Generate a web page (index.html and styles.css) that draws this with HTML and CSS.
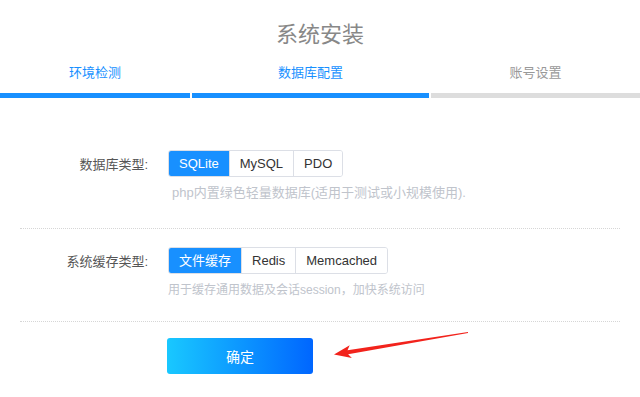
FILE: index.html
```html
<!DOCTYPE html>
<html lang="zh-CN">
<head>
    <meta charset="UTF-8">
    <title>系统安装</title>
    <link rel="stylesheet" href="styles.css">
</head>
<body>
<div class="page">
    <div class="header">
        <h1>系统安装</h1>
        <div class="steps">
            <div class="step done" style="width: 190px">
                <div class="step-label">环境检测</div>
                <div class="step-bar"></div>
            </div>
            <div class="step done" style="width: 237px">
                <div class="step-label">数据库配置</div>
                <div class="step-bar"></div>
            </div>
            <div class="step" style="width: 209px">
                <div class="step-label">账号设置</div>
                <div class="step-bar"></div>
            </div>
        </div>
    </div>

    <div class="form">
        <div class="form-item first">
            <div class="form-row">
                <label class="form-label">数据库类型:</label>
                <div class="btn-group">
                    <span class="opt active">SQLite</span>
                    <span class="opt">MySQL</span>
                    <span class="opt">PDO</span>
                </div>
            </div>
            <div class="form-tip big">php内置绿色轻量数据库(适用于测试或小规模使用).</div>
        </div>
        <div class="form-item">
            <div class="form-row">
                <label class="form-label">系统缓存类型:</label>
                <div class="btn-group">
                    <span class="opt active">文件缓存</span>
                    <span class="opt">Redis</span>
                    <span class="opt">Memcached</span>
                </div>
            </div>
            <div class="form-tip">用于缓存通用数据及会话session，加快系统访问</div>
        </div>
        <div class="form-foot">
            <button class="btn-submit">确定</button>
        </div>
    </div>

    <!-- 标注箭头 -->
    <svg class="arrow" viewBox="330 326 142 40" width="142" height="40">
        <polygon fill="#f2231c" points="468,332.1 347.5,350.2 349.7,345.3 334,354.5 351.9,358.1 348.1,354.2 468,332.9"/>
    </svg>
</div>
</body>
</html>
```

FILE: styles.css
```css
body {
    margin: 0;
    background: #fff;
    font-family: "Liberation Sans", "Noto Sans CJK SC", sans-serif;
    font-size: 13px;
    color: #333;
}

.page {
    position: relative;
    width: 640px;
    height: 397px;
    overflow: hidden;
}

.header {
    padding-top: 20px;
}

h1 {
    margin: 0;
    font-size: 22px;
    font-weight: normal;
    line-height: 30px;
    color: #888;
    text-align: center;
}

.steps {
    display: flex;
    gap: 2px;
    margin-top: 13px;
}

.step-label {
    line-height: 20px;
    font-size: 13px;
    text-align: center;
    color: #999;
}

.step-bar {
    height: 5px;
    margin-top: 10px;
    background: #ddd;
}

.step.done .step-label {
    color: #1890ff;
}

.step.done .step-bar {
    background: #1890ff;
}

.form {
    margin-top: 30px;
}

.form-item {
    margin: 0 20px;
    padding: 18px 0 23px;
    border-bottom: 1px dotted #d6d6d6;
}

.form-item.first {
    padding: 22px 0 27px;
}

.form-row {
    display: flex;
    align-items: center;
    gap: 20px;
}

.form-label {
    width: 128px;
    text-align: right;
    color: #555;
}

.btn-group {
    display: flex;
    border: 1px solid #dcdfe6;
    border-radius: 3px;
    overflow: hidden;
}

.opt {
    padding: 0 10px;
    line-height: 25px;
    border-left: 1px solid #dcdfe6;
    background: #fff;
    color: #333;
}

.opt:first-child {
    border-left: none;
}

.opt.active {
    background: #1890ff;
    color: #fff;
}

.form-tip {
    margin: 8px 0 0 148px;
    line-height: 16px;
    font-size: 12px;
    color: #c0c4cc;
}

.form-tip.big {
    font-size: 13px;
    padding-left: 4px;
}

.form-foot {
    padding: 16px 0 0 167px;
}

.btn-submit {
    display: block;
    width: 146px;
    height: 36px;
    border: none;
    border-radius: 3px;
    background: linear-gradient(90deg, #19c8ff, #0066ff);
    color: #fff;
    font-family: "Liberation Sans", "Noto Sans CJK SC", sans-serif;
    font-size: 14px;
    cursor: pointer;
}

.arrow {
    position: absolute;
    left: 330px;
    top: 326px;
}
```
